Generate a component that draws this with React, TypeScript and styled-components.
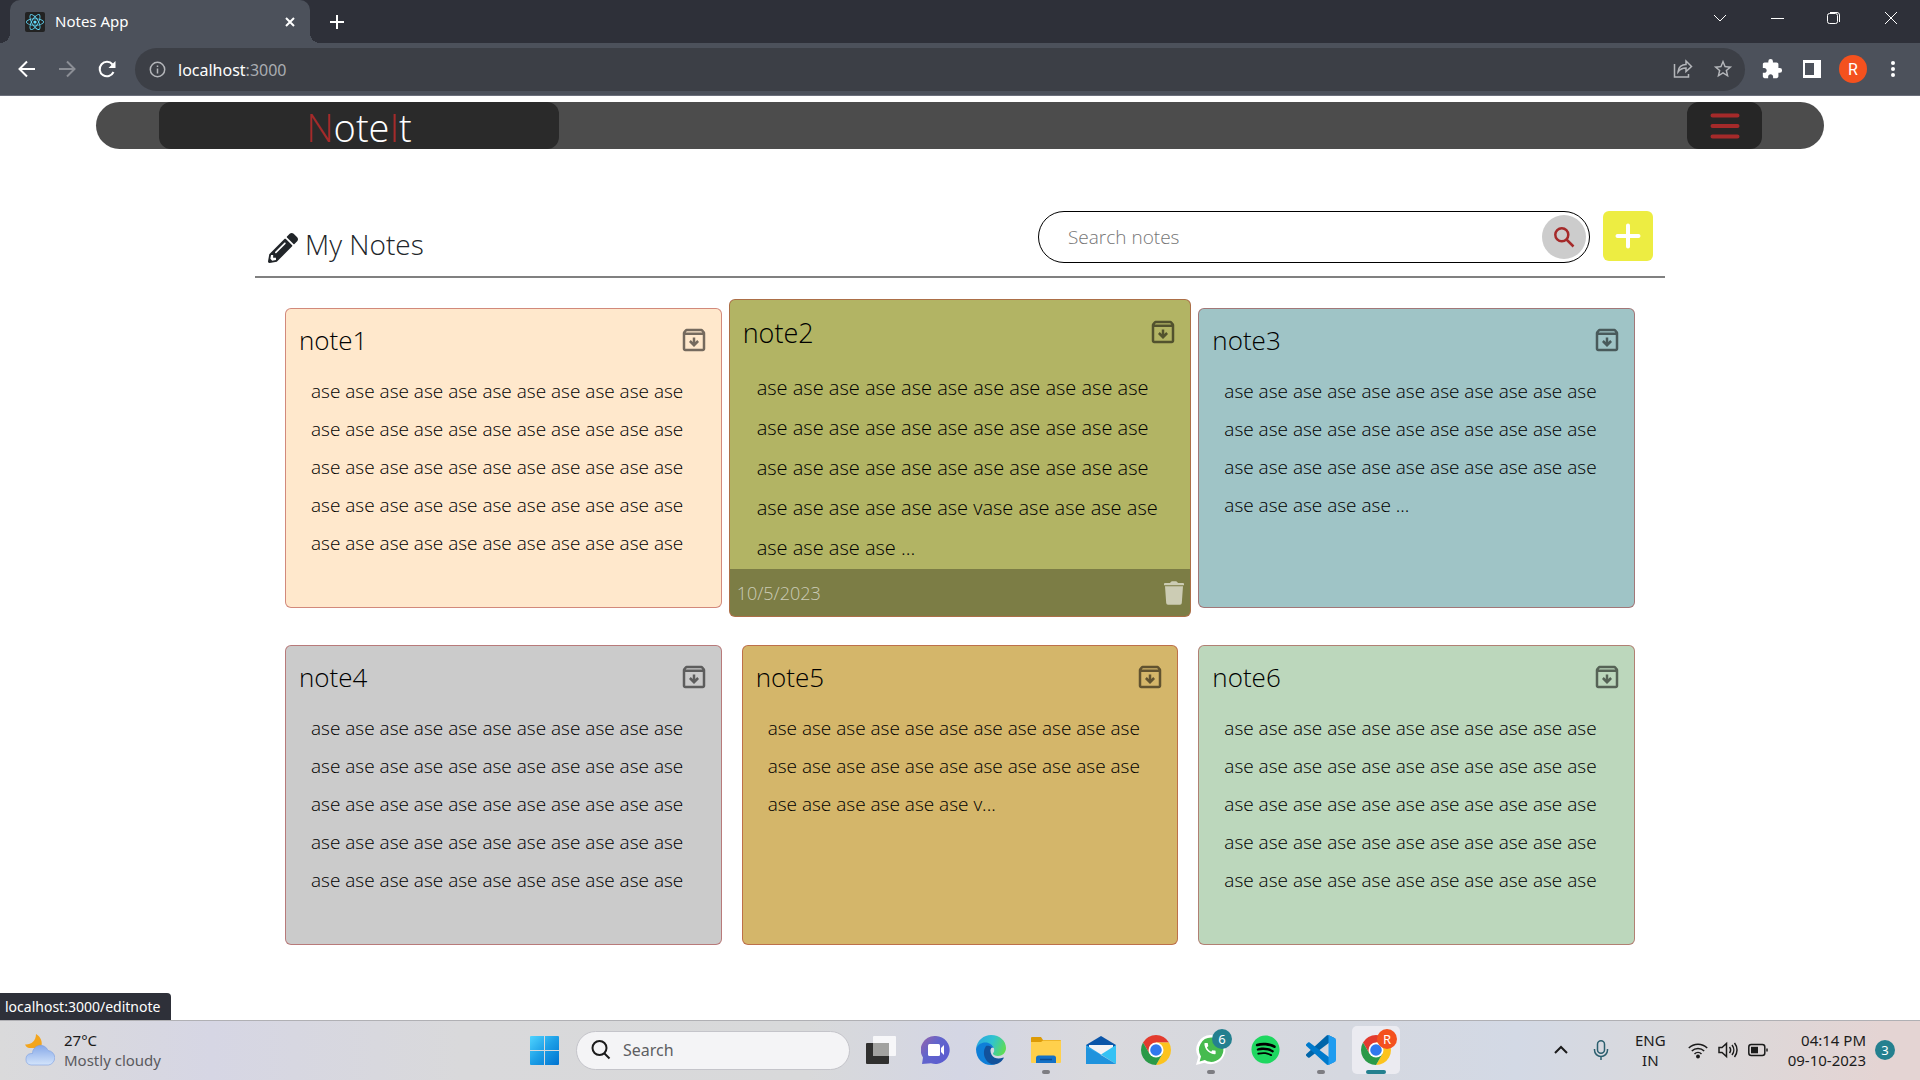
import React from "react";
import styled, { createGlobalStyle, css } from "styled-components";
import { FaPencilAlt, FaReact, FaSpotify } from "react-icons/fa";
import { MdCall, MdExtension, MdStarBorder } from "react-icons/md";

const uiFont = `"Noto Sans", "Open Sans", sans-serif`;
const noteFont = `"Open Sans", "Noto Sans", sans-serif`;

const GlobalStyle = createGlobalStyle`
  *, *::before, *::after { box-sizing: border-box; }
  body { margin: 0; background: #fff; font-family: ${uiFont}; }
  button { border: 0; padding: 0; background: none; color: inherit; font: inherit; cursor: pointer; }
  input { font: inherit; }
  svg { display: block; flex: none; }
  h1, h2, p { margin: 0; font-size: inherit; font-weight: inherit; }
  a { color: inherit; text-decoration: none; }
`;

const Desktop = styled.div`
  display: flex;
  flex-direction: column;
  min-height: 100vh;
`;

/* ---------- browser window ---------- */

const TabStrip = styled.div`
  display: flex;
  align-items: stretch;
  height: 43px;
  padding: 0 1px 0 10px;
  background: #2e3039;
`;

const Tab = styled.div`
  position: relative;
  display: flex;
  align-items: center;
  gap: 10px;
  width: 300px;
  padding: 0 12px 0 15px;
  border-radius: 10px 10px 0 0;
  background: #4c515b;
  color: #fff;
  font-size: 15px;
  line-height: 20px;

  &::before,
  &::after {
    content: "";
    position: absolute;
    bottom: 0;
    width: 10px;
    height: 10px;
  }
  &::before {
    left: -10px;
    background: radial-gradient(circle at 0 0, transparent 10px, #4c515b 10px);
  }
  &::after {
    right: -10px;
    background: radial-gradient(circle at 100% 0, transparent 10px, #4c515b 10px);
  }
`;

const Favicon = styled.span`
  display: grid;
  place-items: center;
  width: 20px;
  height: 20px;
  border-radius: 2px;
  background: #222;
  color: #61dafb;
`;

const TabTitle = styled.span`
  flex: 1;
  padding-bottom: 2px;
`;

const IconButton = styled.button<{ $size?: number; $color?: string }>`
  display: grid;
  place-items: center;
  flex: none;
  width: ${(p) => p.$size ?? 16}px;
  height: ${(p) => p.$size ?? 16}px;
  color: ${(p) => p.$color ?? "#fff"};
`;

const NewTab = styled(IconButton)`
  align-self: center;
  margin-left: 15px;
`;

const WindowControls = styled.div`
  display: flex;
  align-items: center;
  height: 36px;
  margin-left: auto;
`;

const WindowButton = styled.button`
  display: grid;
  place-items: center;
  width: 57px;
  height: 36px;
  color: #fff;
`;

const Toolbar = styled.div`
  display: flex;
  align-items: center;
  height: 53px;
  padding: 0 15px 0 14px;
  border-bottom: 1px solid #6b6f7b;
  background: #4c515b;
`;

const ToolbarGroup = styled.div`
  display: flex;
  align-items: center;
  gap: 14px;
`;

const Omnibox = styled.div`
  display: flex;
  flex: 1;
  align-items: center;
  height: 43px;
  margin: 0 14px 0 15px;
  padding: 0 9px 0 10px;
  border-radius: 22px;
  background: #3c3f46;
`;

const Address = styled.div`
  flex: 1;
  margin-left: 9px;
  padding-top: 1px;
  color: #aaadb2;
  font-size: 16px;
  outline: none;

  b {
    color: #fff;
    font-weight: 400;
  }
`;

const Avatar = styled.button`
  width: 28px;
  height: 28px;
  border-radius: 50%;
  background: #f4511e;
  color: #fff;
  font-family: Roboto, sans-serif;
  font-size: 16px;
`;

/* ---------- notes page ---------- */

const Page = styled.main`
  position: relative;
  flex: 1;
  padding-top: 6px;
  background: #fff;
  color: #000;
  font-family: ${noteFont};
  font-weight: 300;
`;

const NavBar = styled.nav`
  display: flex;
  justify-content: space-between;
  width: 90%;
  height: 47px;
  margin: 0 auto;
  padding: 0 62px 0 63px;
  border-radius: 24px;
  background: #4c4c4c;
`;

const Brand = styled.a`
  width: 400px;
  border-radius: 12px;
  background: #2a2a2a;
  color: #fff;
  font-size: 38px;
  line-height: 50px;
  text-align: center;

  span {
    color: brown;
  }
`;

const MenuButton = styled.button`
  display: grid;
  place-items: center;
  width: 75px;
  border-radius: 12px;
  background: #262626;
  color: brown;
`;

const Content = styled.section`
  max-width: 1410px;
  margin: 62px auto 0;
`;

const Header = styled.header`
  display: flex;
  align-items: flex-start;
  height: 67px;
  padding: 0 12px;
  border-bottom: 2px solid #808080;
`;

const Heading = styled.h1`
  display: flex;
  flex: 1;
  align-items: center;
  gap: 7px;
  padding: 13px 0 0 1px;
  color: #212529;
  font-size: 28px;
  line-height: 40px;

  svg {
    margin-top: 8px;
  }
`;

const SearchBox = styled.form`
  display: flex;
  align-items: center;
  width: 552px;
  height: 52px;
  margin-right: 13px;
  padding: 0 3px 0 29px;
  border: 1px solid #000;
  border-radius: 26px;
`;

const SearchInput = styled.input`
  flex: 1;
  min-width: 0;
  padding: 0;
  border: 0;
  outline: none;
  background: none;
  color: #000;
  font-size: 19px;

  &::placeholder {
    color: #757575;
  }
`;

const SearchButton = styled.button`
  display: grid;
  place-items: center;
  width: 44px;
  height: 44px;
  border-radius: 50%;
  background: #ccc;
  color: brown;
`;

const AddButton = styled.button`
  display: grid;
  place-items: center;
  width: 50px;
  height: 50px;
  border-radius: 6px;
  background: #eded42;
  color: #fff;
`;

const NoteGrid = styled.div`
  display: grid;
  grid-template-columns: repeat(3, minmax(0, 1fr));
  gap: 37px 20px;
  padding: 30px 30px 75px;
`;

const CardBody = styled.div`
  flex: 1;
  min-height: 0;
  padding: 11px 12px 0 13px;
`;

const CardHead = styled.div`
  display: flex;
  align-items: center;
  justify-content: space-between;
  height: 40px;
  font-size: 26px;
`;

const CardText = styled.p`
  padding: 12px 12px 0;
  font-size: 19px;
  line-height: 38px;
`;

const CardFoot = styled.footer`
  display: flex;
  align-items: center;
  justify-content: space-between;
  height: 47px;
  padding: 0 4px 0 7px;
  background: rgba(0, 0, 0, 0.3);
  color: rgba(255, 255, 255, 0.62);
  font-size: 18px;
`;

const Card = styled.article<{ $color: string; $active?: boolean }>`
  display: flex;
  flex-direction: column;
  height: 300px;
  overflow: hidden;
  border: 1px solid rgba(165, 42, 42, 0.5);
  border-radius: 6px;
  background: ${(p) => p.$color};

  ${(p) =>
    p.$active &&
    css`
      height: 318px;
      margin: -9px -13px;

      ${CardBody} {
        padding-top: 12px;
      }
      ${CardHead} {
        font-size: 27px;
      }
      ${CardText} {
        padding-top: 16px;
        padding-left: 14px;
        font-size: 20px;
        line-height: 40px;
      }
    `}
`;

const StatusBubble = styled.div`
  position: absolute;
  bottom: 0;
  left: 0;
  padding: 0 11px 0 5px;
  border-radius: 0 4px 0 0;
  background: #2e3039;
  color: #fff;
  font-family: ${uiFont};
  font-size: 14px;
  font-weight: 400;
  line-height: 27px;
`;

/* ---------- taskbar ---------- */

const Taskbar = styled.footer`
  display: grid;
  grid-template-columns: 1fr auto 1fr;
  align-items: center;
  height: 60px;
  padding-bottom: 1px;
  border-top: 1px solid #b0b0b4;
  background: linear-gradient(90deg, #dadadb 0%, #d6d6e4 11%, #d9d9db 24%, #d8d9da 42%, #d4d6e4 50%, #d9d9dd 57%, #d5d8e0 70%, #d3d9e5 79%, #dad9db 88%, #e4d4d3 98%);
  color: #1b1b1b;
  font-size: 15px;
  line-height: 20px;
`;

const Weather = styled.button`
  display: flex;
  align-items: center;
  justify-self: start;
  gap: 9px;
  padding-left: 25px;
  text-align: left;

  span {
    display: block;
  }
  span + span {
    color: #5a5a5e;
  }
`;

const Apps = styled.div`
  display: flex;
  align-items: center;
  gap: 7px;
`;

const AppButton = styled.button<{ $active?: boolean }>`
  position: relative;
  display: grid;
  place-items: center;
  width: 48px;
  height: 48px;
  border-radius: 5px;
  background: ${(p) => (p.$active ? "#ebebf1" : "none")};
`;

const Running = styled.i<{ $active?: boolean }>`
  position: absolute;
  bottom: 0;
  left: 50%;
  width: ${(p) => (p.$active ? 20 : 8)}px;
  height: 4px;
  border-radius: 2px;
  background: ${(p) => (p.$active ? "#24808f" : "#7d7d82")};
  transform: translateX(-50%);
`;

const Badge = styled.span<{ $color: string }>`
  position: absolute;
  top: 3px;
  right: 3px;
  width: 20px;
  height: 20px;
  border-radius: 50%;
  background: ${(p) => p.$color};
  color: #fff;
  font-size: 13px;
  line-height: 20px;
  text-align: center;
`;

const TaskSearch = styled.label`
  display: flex;
  align-items: center;
  gap: 12px;
  width: 274px;
  height: 39px;
  margin-left: 1px;
  padding: 0 14px;
  border: 1px solid #c4c4ca;
  border-radius: 20px;
  background: #f4f4f6;
`;

const TaskSearchInput = styled.input`
  flex: 1;
  min-width: 0;
  padding: 0;
  border: 0;
  outline: none;
  background: none;
  font-size: 16px;

  &::placeholder {
    color: #5e5e62;
  }
`;

const Tray = styled.div`
  display: flex;
  align-items: center;
  justify-content: flex-end;
  padding-right: 25px;
`;

const TrayIcons = styled.button`
  display: flex;
  align-items: center;
  gap: 10px;
  margin: 0 20px 0 22px;
`;

const Language = styled.button`
  margin-left: 6px;
  text-align: center;
`;

const Clock = styled.button`
  text-align: right;
`;

const Notifications = styled.button`
  width: 20px;
  height: 20px;
  margin-left: 9px;
  border-radius: 50%;
  background: #24808f;
  color: #fff;
  font-size: 13px;
  line-height: 20px;
`;

/* ---------- drawings ---------- */

type StrokeProps = {
  d: string;
  size?: number;
  box?: number;
  width?: number;
  children?: React.ReactNode;
};

const Stroke = ({ d, size = 16, box = size, width = 2, children }: StrokeProps) => (
  <svg width={size} height={size} viewBox={`0 0 ${box} ${box}`} fill="none" stroke="currentColor" strokeWidth={width}>
    <path d={d} />
    {children}
  </svg>
);

const ArchiveIcon = ({ size }: { size: number }) => (
  <svg width={size} height={size} viewBox="0 0 24 24" fill="rgba(0,0,0,0.54)">
    <path d="M20.54 5.23l-1.39-1.68C18.88 3.21 18.47 3 18 3H6c-.47 0-.88.21-1.16.55L3.46 5.23C3.17 5.57 3 6.02 3 6.5V19c0 1.1.9 2 2 2h14c1.1 0 2-.9 2-2V6.5c0-.48-.17-.93-.46-1.27zM6.24 5h11.52l.83 1H5.42l.82-1zM5 19V8h14v11H5zm11-5.500l-4 4-4-4 1.410-1.410L11 13.670V10h2v3.670l1.590-1.590L16 13.500z" />
  </svg>
);

const TrashIcon = () => (
  <svg width="20" height="24" viewBox="0 0 20 24" fill="#ccccb4">
    <path d="M0 3q0-1 1-1h5q1-1.800 2-1.800h4q1 0 2 1.800h5q1 0 1 1v1.200H0z" />
    <path d="M1 5.200h18L17.800 22q-.1 1.800-1.800 1.800H4Q2.300 23.800 2.200 22z" />
  </svg>
);

const ChromeLogo = () => (
  <svg width="30" height="30" viewBox="2 2 44 44">
    <path fill="#e33b2e" d="M4.950 13A22 22 0 0 1 43.050 13H24v11l-9.530 5.500z" />
    <path fill="#fcc31e" d="M43.050 13A22 22 0 0 1 24 46l9.530-16.500L24 24V13z" />
    <path fill="#2a9a48" d="M24 46A22 22 0 0 1 4.950 13l9.520 16.500L24 24l9.530 5.500z" />
    <circle cx="24" cy="24" r="11" fill="#fff" />
    <circle cx="24" cy="24" r="8.500" fill="#3079ee" />
  </svg>
);

const EdgeLogo = () => (
  <svg width="30" height="30" viewBox="1 1 30 30">
    <defs>
      <linearGradient id="edgeTop" x1="0" y1="0.300" x2="1" y2="0.600">
        <stop offset="0" stopColor="#2aa8e0" />
        <stop offset="0.500" stopColor="#2fc3d0" />
        <stop offset="1" stopColor="#5fdc52" />
      </linearGradient>
    </defs>
    <path fill="url(#edgeTop)" d="M1 15C2 6 9 1 16 1c9 0 15 6 15 13 0 5-4 8-8 8-3 0-5-1-5-2.200 0-1 1.200-1.500 1.200-3.800 0-4-4.200-7-8.200-7-5 0-9 3-10 6z" />
    <path fill="#0f7fd8" d="M1 15c1-4 5-6.500 9.500-6.500 4 0 7.500 2.500 8.300 5.500-3-1.800-6.800 1-6.800 5 0 6 5 10 10 10.500C19 31 17 31 16 31 8 31 1 25 1 15z" />
    <path fill="#12529c" d="M11 12c-4 6-2 14 4 17.500 5 2.500 10.500 0 13.500-5 .5-.8 0-1.200-.8-.8-3.500 1.600-9 1-11-2.700C15 18 15 15 17 13.200 14.500 12 12.500 11.500 11 12z" />
  </svg>
);

const WhatsAppLogo = () => (
  <svg width="30" height="30" viewBox="0 0 30 30">
    <path fill="#fff" d="M15.200 0A14.600 14.600 0 1 1 8.300 27.700L0 30l2.300-8A14.600 14.600 0 0 1 15.200 0z" />
    <path fill="#46bb4f" d="M15.200 2.500A12.200 12.200 0 1 1 8.800 25.100L3.600 26.500 5 21.400A12.200 12.200 0 0 1 15.200 2.500z" />
    <MdCall x="6.500" y="6" width="17" height="17" color="#fff" />
  </svg>
);

const CodeLogo = () => (
  <svg width="30" height="30" viewBox="0 0 100 100">
    <path fill="#0065a9" d="M96.461 10.796L75.857.876C73.472-.273 70.622.212 68.750 2.083L1.299 63.583c-1.815 1.654-1.813 4.511.004 6.162l5.510 5.009c1.485 1.350 3.722 1.450 5.321.237L93.361 13.370C96.086 11.303 100 13.246 100 16.667v-.239c0-2.401-1.375-4.590-3.539-5.632z" />
    <path fill="#007acc" d="M96.461 89.204L75.857 99.125c-2.385 1.148-5.235.663-7.107-1.208L1.299 36.417c-1.815-1.654-1.813-4.511.004-6.162l5.510-5.009c1.485-1.350 3.722-1.450 5.321-.237L93.361 86.630C96.086 88.697 100 86.754 100 83.333v.240c0 2.401-1.375 4.589-3.539 5.631z" />
    <path fill="#1f9cf0" d="M75.858 99.126c-2.386 1.148-5.236.662-7.108-1.209C71.056 100.223 75 98.590 75 95.328V4.672C75 1.410 71.056-.223 68.750 2.083c1.872-1.871 4.722-2.356 7.108-1.209l20.601 9.907C98.623 11.822 100 14.011 100 16.413v67.174c0 2.402-1.377 4.592-3.541 5.633z" />
  </svg>
);

const WindowsLogo = () => (
  <svg width="29" height="29" viewBox="0 0 29 29">
    <defs>
      <linearGradient id="winBlue" gradientUnits="userSpaceOnUse" x1="0" y1="0" x2="29" y2="29">
        <stop offset="0" stopColor="#4fd4ff" />
        <stop offset="0.500" stopColor="#1c9ee6" />
        <stop offset="1" stopColor="#0073d0" />
      </linearGradient>
    </defs>
    <path fill="url(#winBlue)" d="M1 0h13v14H0V1q0-1 1-1zM15 0h13q1 0 1 1v13H15zM0 15h14v14H1q-1 0-1-1zM15 15h14v13q0 1-1 1H15z" />
  </svg>
);

const TaskViewIcon = () => (
  <svg width="30" height="30" viewBox="0 0 30 30">
    <rect y="8" width="23" height="21" rx="1" fill="#30302f" />
    <rect x="7" y="1" width="23" height="20" rx="1" fill="#fff" fillOpacity="0.800" />
    <rect x="7" y="8" width="16" height="13" fill="#a2a2a0" />
  </svg>
);

const ChatLogo = () => (
  <svg width="30" height="30" viewBox="0 0 30 30">
    <defs>
      <linearGradient id="chatFill" x1="0" y1="0" x2="1" y2="0.800">
        <stop offset="0" stopColor="#9a63a8" />
        <stop offset="0.450" stopColor="#6265cc" />
        <stop offset="1" stopColor="#5a5bd0" />
      </linearGradient>
    </defs>
    <path fill="url(#chatFill)" d="M15 1a14 14 0 1 1-5 27.200L1 29l1-6.500A14 14 0 0 1 15 1z" />
    <rect x="7" y="9" width="12" height="12" rx="1.500" fill="#fff" />
    <path fill="#fff" d="M20 13l3-3v10l-3-3z" />
  </svg>
);

const ExplorerLogo = () => (
  <svg width="30" height="28" viewBox="0 0 30 28">
    <path fill="#dd9b06" d="M0 2q0-1 1-1h9l2 3h17q1 0 1 1v4H0z" />
    <path fill="#ffd04c" d="M0 6h10l2-1.500h18V26q0 1-1 1H1q-1 0-1-1z" />
    <path fill="#1471c6" d="M5 27v-5q0-2.500 2.500-2.500h15Q25 19.500 25 22v5z" />
    <path stroke="#0b4c91" strokeWidth="1.500" d="M9 23.500h12" />
  </svg>
);

const MailLogo = () => (
  <svg width="30" height="28" viewBox="0 0 30 28">
    <path fill="#0a55a8" d="M0 9L15 0l15 9v4H0z" />
    <path fill="#f3f3f5" d="M3 9h24v5L15 20 3 14z" />
    <path fill="#2ba4e8" d="M0 9l15 9.500L0 28z" />
    <path fill="#35c2f4" d="M30 9l-15 9.500L30 28z" />
    <path fill="#1f93dd" d="M0 28V11l15 8 15 9z" />
  </svg>
);

const WeatherIcon = () => (
  <svg width="30" height="32" viewBox="0 0 30 32">
    <defs>
      <linearGradient id="cloudFill" x1="0" y1="0" x2="0" y2="1">
        <stop offset="0" stopColor="#86a8e8" />
        <stop offset="1" stopColor="#d3e4fb" />
      </linearGradient>
    </defs>
    <path fill="#f3a51d" d="M11 0c5 3 7 8 5 14H4c-2-.5-3.500-2-4-3.500C6 11 11 7 11 0z" />
    <path fill="url(#cloudFill)" stroke="#7c9fe2" strokeWidth="0.600" d="M6 31a5.800 5.800 0 0 1 0-11.500h1.500a8 8 0 0 1 15.500-3A7.300 7.300 0 0 1 23.500 31z" />
  </svg>
);

/* ---------- data ---------- */

const ase = (count: number) => Array(count).fill("ase").join(" ");

const notes = [
  { title: "note1", color: "#ffe8cc", text: ase(55) },
  { title: "note2", color: "#b2b464", text: `${ase(39)} vase ${ase(8)} ...`, date: "10/5/2023" },
  { title: "note3", color: "#9fc4c6", text: `${ase(38)} ...` },
  { title: "note4", color: "#cbcbcb", text: ase(55) },
  { title: "note5", color: "#d4b66a", text: `${ase(28)} v...` },
  { title: "note6", color: "#bcd7bc", text: ase(55) },
];

/* ---------- parts ---------- */

const BrowserChrome = () => (
  <header>
    <TabStrip>
      <Tab>
        <Favicon><FaReact size={18} /></Favicon>
        <TabTitle>Notes App</TabTitle>
        <IconButton aria-label="Close tab"><Stroke size={16} d="M4 4l8 8M12 4l-8 8" /></IconButton>
      </Tab>
      <NewTab $size={24} aria-label="New tab"><Stroke size={16} d="M8 1v14M1 8h14" /></NewTab>
      <WindowControls>
        <WindowButton aria-label="Search tabs"><Stroke size={14} width={1} d="M1 4l6 6 6-6" /></WindowButton>
        <WindowButton aria-label="Minimize"><Stroke size={14} width={1} d="M1 7.500h13" /></WindowButton>
        <WindowButton aria-label="Restore">
          <Stroke size={14} width={1} d="M3 1.500h7q2.500 0 2.500 2.500v7">
            <rect x="0.500" y="2.500" width="10" height="10" rx="2" />
          </Stroke>
        </WindowButton>
        <WindowButton aria-label="Close"><Stroke size={14} width={1} d="M1 1l12 12M13 1L1 13" /></WindowButton>
      </WindowControls>
    </TabStrip>
    <Toolbar>
      <ToolbarGroup>
        <IconButton $size={26} aria-label="Back"><Stroke size={18} d="M17 9H2M9 1.500L1.500 9 9 16.500" /></IconButton>
        <IconButton $size={26} $color="#8b8e95" aria-label="Forward"><Stroke size={18} d="M1 9h15M9 1.500L16.500 9 9 16.500" /></IconButton>
        <IconButton $size={26} aria-label="Reload">
          <Stroke size={18} d="M15.500 12A7.200 7.200 0 1 1 14.500 4.500">
            <path d="M17.500 1v7h-7z" fill="currentColor" stroke="none" />
          </Stroke>
        </IconButton>
      </ToolbarGroup>
      <Omnibox>
        <IconButton $size={24} $color="#b4b6ba" aria-label="Site information">
          <Stroke size={17} width={1.5} d="M8.500 7.500v5M8.500 4.500v1.500"><circle cx="8.500" cy="8.500" r="7.200" /></Stroke>
        </IconButton>
        <Address role="textbox" aria-label="Address" contentEditable suppressContentEditableWarning spellCheck={false}>
          <b>localhost</b>:3000
        </Address>
        <ToolbarGroup>
          <IconButton $size={26} $color="#b4b6ba" aria-label="Share">
            <Stroke size={20} width={1.5} d="M1.500 5v13h14v-3M5 13c0-5 4-7.500 8-7.500V2l5.500 5.500L13 12.500V9c-4 0-6 1-8 4z" />
          </IconButton>
          <IconButton $size={26} $color="#b4b6ba" aria-label="Bookmark"><MdStarBorder size={22} /></IconButton>
        </ToolbarGroup>
      </Omnibox>
      <ToolbarGroup>
        <IconButton $size={26} aria-label="Extensions"><MdExtension size={22} /></IconButton>
        <IconButton $size={26} aria-label="Side panel">
          <svg width="18" height="18" viewBox="0 0 18 18" fill="currentColor"><path fillRule="evenodd" d="M0 0h18v18H0zM2 3v12h9V3z" /></svg>
        </IconButton>
        <Avatar>R</Avatar>
        <IconButton $size={24} aria-label="Browser menu">
          <svg width="4" height="18" viewBox="0 0 4 18" fill="currentColor">
            <circle cx="2" cy="3" r="2" /><circle cx="2" cy="9" r="2" /><circle cx="2" cy="15" r="2" />
          </svg>
        </IconButton>
      </ToolbarGroup>
    </Toolbar>
  </header>
);

const NoteCard = ({ title, color, text, date }: (typeof notes)[number]) => (
  <Card $color={color} $active={!!date}>
    <CardBody>
      <CardHead>
        <h2><a href="/editnote">{title}</a></h2>
        <IconButton $size={30} aria-label={`Archive ${title}`}><ArchiveIcon size={30} /></IconButton>
      </CardHead>
      <CardText>{text}</CardText>
    </CardBody>
    {date && (
      <CardFoot>
        <span>{date}</span>
        <IconButton $size={24} aria-label={`Delete ${title}`}><TrashIcon /></IconButton>
      </CardFoot>
    )}
  </Card>
);

const NotesPage = () => (
  <Page>
    <NavBar>
      <Brand href="/"><span>N</span>ote<span>I</span>t</Brand>
      <MenuButton aria-label="Menu">
        <svg width="30" height="26" viewBox="0 0 30 26" stroke="currentColor" strokeWidth="4" strokeLinecap="round">
          <path d="M2.500 2.500h25M2.500 13h25M2.500 23.500h25" />
        </svg>
      </MenuButton>
    </NavBar>
    <Content>
      <Header>
        <Heading><FaPencilAlt size={30} />My Notes</Heading>
        <SearchBox role="search" onSubmit={(e) => e.preventDefault()}>
          <SearchInput type="text" placeholder="Search notes" aria-label="Search notes" />
          <SearchButton aria-label="Search">
            <Stroke size={22} width={2.5} d="M13.500 13.500l7 7"><circle cx="8.800" cy="8.800" r="6.500" /></Stroke>
          </SearchButton>
        </SearchBox>
        <AddButton aria-label="Add note">
          <svg width="26" height="26" viewBox="0 0 26 26" stroke="currentColor" strokeWidth="4" strokeLinecap="round">
            <path d="M13 2.500v21M2.500 13h21" />
          </svg>
        </AddButton>
      </Header>
      <NoteGrid>
        {notes.map((note) => <NoteCard key={note.title} {...note} />)}
      </NoteGrid>
    </Content>
    <StatusBubble>localhost:3000/editnote</StatusBubble>
  </Page>
);

const SystemTaskbar = () => (
  <Taskbar>
    <Weather>
      <WeatherIcon />
      <div><span>27°C</span><span>Mostly cloudy</span></div>
    </Weather>
    <Apps>
      <AppButton aria-label="Start"><WindowsLogo /></AppButton>
      <TaskSearch>
        <Stroke size={20} width={2} d="M13 13l5.500 5.500"><circle cx="8.500" cy="8" r="7" /></Stroke>
        <TaskSearchInput type="text" placeholder="Search" aria-label="Search the computer" />
      </TaskSearch>
      <AppButton aria-label="Task view"><TaskViewIcon /></AppButton>
      <AppButton aria-label="Chat"><ChatLogo /></AppButton>
      <AppButton aria-label="Edge"><EdgeLogo /></AppButton>
      <AppButton aria-label="File Explorer"><ExplorerLogo /><Running /></AppButton>
      <AppButton aria-label="Mail"><MailLogo /></AppButton>
      <AppButton aria-label="Chrome"><ChromeLogo /></AppButton>
      <AppButton aria-label="WhatsApp"><WhatsAppLogo /><Badge $color="#24808f">6</Badge><Running /></AppButton>
      <AppButton aria-label="Spotify">
        <svg width="30" height="30" viewBox="0 0 30 30">
          <circle cx="15" cy="15" r="12" fill="#000" />
          <FaSpotify size={29} color="#1ed760" />
        </svg>
      </AppButton>
      <AppButton aria-label="Visual Studio Code"><CodeLogo /><Running /></AppButton>
      <AppButton $active aria-label="Notes App"><ChromeLogo /><Badge $color="#f4511e">R</Badge><Running $active /></AppButton>
    </Apps>
    <Tray>
      <IconButton $size={24} $color="#1b1b1b" aria-label="Hidden icons"><Stroke size={14} d="M1 10l6-6 6 6" /></IconButton>
      <IconButton $size={56} $color="#2b5f6e" aria-label="Microphone">
        <Stroke size={20} width={1.5} d="M3.500 9v1a6.500 6.500 0 0 0 13 0V9M10 16.500V20"><rect x="6.500" y="0.800" width="7" height="12.500" rx="3.500" /></Stroke>
      </IconButton>
      <Language>ENG<br />IN</Language>
      <TrayIcons aria-label="Network, volume and battery">
        <Stroke size={20} width={1.5} d="M.8 8a13 13 0 0 1 18.400 0M3.800 11a8.800 8.800 0 0 1 12.400 0M6.500 14a5 5 0 0 1 7 0">
          <circle cx="10" cy="16.500" r="1.200" fill="currentColor" />
        </Stroke>
        <Stroke size={20} width={1.5} d="M1 7.500v5h3l4.500 4V3.500l-4.500 4zM11.500 7a5 5 0 0 1 0 6M14 5a8 8 0 0 1 0 10M16.500 3a11 11 0 0 1 0 14" />
        <Stroke size={20} width={1.5} d="M19 8.500v3">
          <rect x="0.800" y="4.500" width="16" height="11" rx="2.500" />
          <rect x="3" y="6.800" width="7" height="6.500" fill="currentColor" stroke="none" />
        </Stroke>
      </TrayIcons>
      <Clock>04:14 PM<br />09-10-2023</Clock>
      <Notifications aria-label="Notifications">3</Notifications>
    </Tray>
  </Taskbar>
);

export default function App() {
  return (
    <Desktop>
      <GlobalStyle />
      <BrowserChrome />
      <NotesPage />
      <SystemTaskbar />
    </Desktop>
  );
}
